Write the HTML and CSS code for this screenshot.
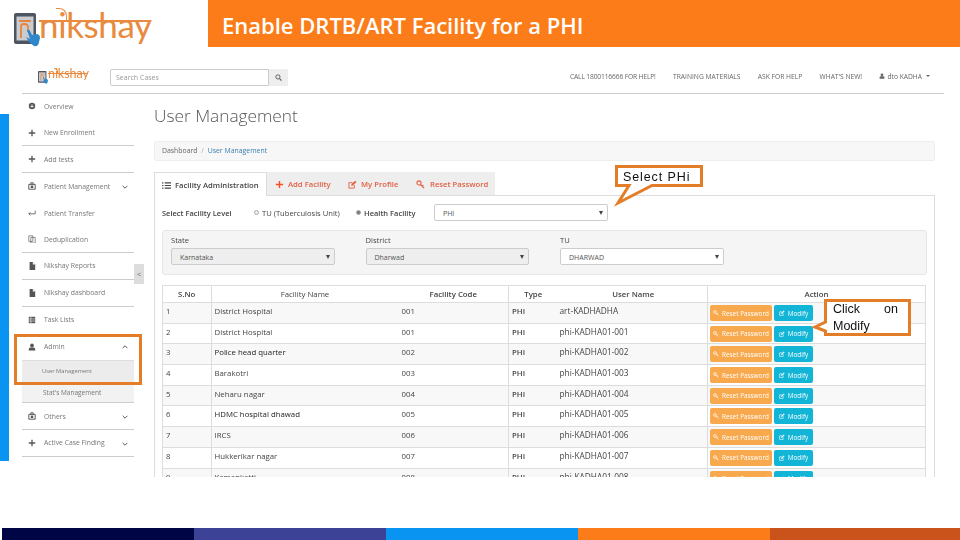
FILE: index.html
```html
<!DOCTYPE html>
<html lang="en">
<head>
<meta charset="utf-8">
<title>Enable DRTB/ART Facility for a PHI</title>
<link rel="stylesheet" href="styles.css">
</head>
<body>
<svg class="defs" width="0" height="0" aria-hidden="true">
  <symbol id="i-tablet" viewBox="0 0 26 34">
    <rect x="0" y="0" width="22" height="31" rx="2" fill="#4d5560"/>
    <rect x="2.500" y="3.500" width="17" height="24" fill="#c9ccd0"/>
    <path d="M5 8H17M7 25V13Q7 11 10 11Q14 11 14 14V19" fill="none" stroke="#e8853a" stroke-width="1.800"/>
    <path d="M13 17Q15 16 16 18L18 22L22 21Q26 21 26 25L24.500 31Q23 34 20 33L15 29L12 24L16 26Z" fill="#2f86c9"/>
  </symbol>
  <symbol id="i-plus" viewBox="0 0 10 10"><path d="M5 1V9M1 5H9" stroke="currentColor" stroke-width="1.600" fill="none"/></symbol>
  <symbol id="i-home" viewBox="0 0 10 10"><circle cx="5" cy="5" r="4" fill="currentColor"/><path d="M3 5.500H7M5 3V7" stroke="#fff" stroke-width="1"/></symbol>
  <symbol id="i-box" viewBox="0 0 10 10"><path d="M1 3H9V9H1ZM3.500 3V1H6.500V3" fill="none" stroke="currentColor" stroke-width="1.200"/><rect x="3.500" y="4.500" width="3" height="3" fill="currentColor"/></symbol>
  <symbol id="i-transfer" viewBox="0 0 10 10"><path d="M9 2V6H1M3 4L1 6L3 8" fill="none" stroke="currentColor" stroke-width="1"/></symbol>
  <symbol id="i-copy" viewBox="0 0 10 10"><path d="M1 1H6V8H1ZM3.500 3H9V10H3.500Z" fill="#fff" stroke="currentColor" stroke-width=".8"/></symbol>
  <symbol id="i-file" viewBox="0 0 10 10"><path d="M2 0H6L9 3V10H2Z" fill="currentColor"/><path d="M6 0V3H9" fill="#fff"/></symbol>
  <symbol id="i-list" viewBox="0 0 10 10"><path d="M1 1H9V9H1Z" fill="currentColor"/><path d="M1 3.700H9M1 6.300H9M3.600 1V9" stroke="#fff" stroke-width=".7"/></symbol>
  <symbol id="i-user" viewBox="0 0 10 10"><circle cx="5" cy="3" r="2.300" fill="currentColor"/><path d="M1 9.500V7.500Q1 5.500 3 5.500H7Q9 5.500 9 7.500V9.500Z" fill="currentColor"/></symbol>
  <symbol id="i-down" viewBox="0 0 10 10"><path d="M2 3.500L5 6.500L8 3.500" fill="none" stroke="currentColor" stroke-width="1.200"/></symbol>
  <symbol id="i-up" viewBox="0 0 10 10"><path d="M2 6.500L5 3.500L8 6.500" fill="none" stroke="currentColor" stroke-width="1.200"/></symbol>
  <symbol id="i-lines" viewBox="0 0 10 10"><path d="M0 2H1.500M3 2H10M0 5H1.500M3 5H10M0 8H1.500M3 8H10" stroke="currentColor" stroke-width="1.300"/></symbol>
  <symbol id="i-edit" viewBox="0 0 10 10"><path d="M7 5.500V9H1V3H5" fill="none" stroke="currentColor" stroke-width="1"/><path d="M3.500 6.500L4 4.500L8 .8L9.400 2.200L5.500 6Z" fill="currentColor"/></symbol>
  <symbol id="i-key" viewBox="0 0 10 10"><circle cx="3.300" cy="3.300" r="2.300" fill="none" stroke="currentColor" stroke-width="1.200"/><path d="M5 5L9 9M7 7L8.300 5.700" fill="none" stroke="currentColor" stroke-width="1.200"/></symbol>
  <symbol id="i-search" viewBox="0 0 10 10"><circle cx="4.200" cy="4.200" r="3" fill="none" stroke="currentColor" stroke-width="1.300"/><path d="M6.500 6.500L9.300 9.300" stroke="currentColor" stroke-width="1.500"/></symbol>
</svg>

<div class="slide">
  <header class="slide-head">
    <div class="brand brand-large">
      <svg class="brand-mark"><use href="#i-tablet"/></svg>
      <span class="brand-word">nikshay</span>
    </div>
    <h1 class="slide-title">Enable DRTB/ART Facility for a PHI</h1>
  </header>

  <div class="shot">
    <div class="topbar">
      <div class="brand brand-small">
        <svg class="brand-mark"><use href="#i-tablet"/></svg>
        <span class="brand-word">nikshay</span>
      </div>
      <div class="search">
        <span class="search-input">Search Cases</span>
        <span class="search-btn"><svg class="ico"><use href="#i-search"/></svg></span>
      </div>
      <nav class="topnav">
        <span class="top-call">CALL 1800116666 FOR HELP!</span>
        <span>TRAINING MATERIALS</span>
        <span>ASK FOR HELP</span>
        <span>WHAT'S NEW!</span>
        <span class="topuser"><svg class="ico-s"><use href="#i-user"/></svg> dto KADHA <i class="caret"></i></span>
      </nav>
    </div>

    <div class="shot-body">
      <aside class="side">
        <div class="nav-item"><svg class="ico"><use href="#i-home"/></svg>Overview</div>
        <div class="nav-item line"><svg class="ico"><use href="#i-plus"/></svg>New Enrollment</div>
        <div class="nav-item line"><svg class="ico"><use href="#i-plus"/></svg>Add tests</div>
        <div class="nav-item"><svg class="ico"><use href="#i-box"/></svg>Patient Management<svg class="chev"><use href="#i-down"/></svg></div>
        <div class="nav-item"><svg class="ico"><use href="#i-transfer"/></svg>Patient Transfer</div>
        <div class="nav-item line"><svg class="ico"><use href="#i-copy"/></svg>Deduplication</div>
        <div class="nav-item line"><svg class="ico"><use href="#i-file"/></svg>Nikshay Reports</div>
        <div class="nav-item line"><svg class="ico"><use href="#i-file"/></svg>Nikshay dashboard</div>
        <div class="nav-item"><svg class="ico"><use href="#i-list"/></svg>Task Lists</div>
        <div class="nav-item"><svg class="ico"><use href="#i-user"/></svg>Admin<svg class="chev"><use href="#i-up"/></svg></div>
        <div class="sub-item sub-active">User Management</div>
        <div class="sub-item line">Stat's Management</div>
        <div class="nav-item line"><svg class="ico"><use href="#i-box"/></svg>Others<svg class="chev"><use href="#i-down"/></svg></div>
        <div class="nav-item line"><svg class="ico"><use href="#i-plus"/></svg>Active Case Finding<svg class="chev"><use href="#i-down"/></svg></div>
      </aside>

      <main class="main">
        <h2 class="page-title">User Management</h2>
        <div class="crumb">Dashboard <span class="crumb-sep">/</span> <span class="crumb-link">User Management</span></div>

        <div class="tabs">
          <div class="tab tab-active"><svg class="ico-t"><use href="#i-lines"/></svg>Facility Administration</div>
          <div class="tab-rest">
            <div class="tab tab-add"><svg class="ico-t"><use href="#i-plus"/></svg>Add Facility</div>
            <div class="tab tab-profile"><svg class="ico-t"><use href="#i-edit"/></svg>My Profile</div>
            <div class="tab tab-reset"><svg class="ico-t"><use href="#i-key"/></svg>Reset Password</div>
          </div>
        </div>

        <div class="panel">
          <div class="level">
            <b class="level-label">Select Facility Level</b>
            <span class="radio radio-tu"><i class="dot"></i>TU (Tuberculosis Unit)</span>
            <span class="radio radio-hf"><i class="dot dot-on"></i>Health Facility</span>
            <span class="select select-level">PHI<i class="arrow"></i></span>
          </div>

          <div class="filters">
            <div class="filter"><label>State</label><span class="select select-off">Karnataka<i class="arrow"></i></span></div>
            <div class="filter"><label>District</label><span class="select select-off">Dharwad<i class="arrow"></i></span></div>
            <div class="filter"><label>TU</label><span class="select">DHARWAD<i class="arrow"></i></span></div>
          </div>

          <table class="grid">
            <thead>
              <tr><th class="c-no">S.No</th><th class="c-name">Facility Name</th><th class="c-code">Facility Code</th><th class="c-type">Type</th><th class="c-user">User Name</th><th class="c-act">Action</th></tr>
            </thead>
            <tbody>
              <tr><td class="c-no">1</td><td class="c-name">District Hospital</td><td class="c-code">001</td><td class="c-type">PHI</td><td class="c-user">art-KADHADHA</td><td class="c-act"><span class="btn btn-reset"><svg class="ico-b"><use href="#i-key"/></svg>Reset Password</span><span class="btn btn-mod"><svg class="ico-b"><use href="#i-edit"/></svg>Modify</span></td></tr>
              <tr><td class="c-no">2</td><td class="c-name">District Hospital</td><td class="c-code">001</td><td class="c-type">PHI</td><td class="c-user">phi-KADHA01-001</td><td class="c-act"><span class="btn btn-reset"><svg class="ico-b"><use href="#i-key"/></svg>Reset Password</span><span class="btn btn-mod"><svg class="ico-b"><use href="#i-edit"/></svg>Modify</span></td></tr>
              <tr><td class="c-no">3</td><td class="c-name c-dark">Police head quarter</td><td class="c-code">002</td><td class="c-type">PHI</td><td class="c-user">phi-KADHA01-002</td><td class="c-act"><span class="btn btn-reset"><svg class="ico-b"><use href="#i-key"/></svg>Reset Password</span><span class="btn btn-mod"><svg class="ico-b"><use href="#i-edit"/></svg>Modify</span></td></tr>
              <tr><td class="c-no">4</td><td class="c-name">Barakotri</td><td class="c-code">003</td><td class="c-type">PHI</td><td class="c-user">phi-KADHA01-003</td><td class="c-act"><span class="btn btn-reset"><svg class="ico-b"><use href="#i-key"/></svg>Reset Password</span><span class="btn btn-mod"><svg class="ico-b"><use href="#i-edit"/></svg>Modify</span></td></tr>
              <tr><td class="c-no">5</td><td class="c-name">Neharu nagar</td><td class="c-code">004</td><td class="c-type">PHI</td><td class="c-user">phi-KADHA01-004</td><td class="c-act"><span class="btn btn-reset"><svg class="ico-b"><use href="#i-key"/></svg>Reset Password</span><span class="btn btn-mod"><svg class="ico-b"><use href="#i-edit"/></svg>Modify</span></td></tr>
              <tr><td class="c-no">6</td><td class="c-name c-dark">HDMC hospital dhawad</td><td class="c-code">005</td><td class="c-type">PHI</td><td class="c-user">phi-KADHA01-005</td><td class="c-act"><span class="btn btn-reset"><svg class="ico-b"><use href="#i-key"/></svg>Reset Password</span><span class="btn btn-mod"><svg class="ico-b"><use href="#i-edit"/></svg>Modify</span></td></tr>
              <tr><td class="c-no">7</td><td class="c-name">IRCS</td><td class="c-code">006</td><td class="c-type">PHI</td><td class="c-user">phi-KADHA01-006</td><td class="c-act"><span class="btn btn-reset"><svg class="ico-b"><use href="#i-key"/></svg>Reset Password</span><span class="btn btn-mod"><svg class="ico-b"><use href="#i-edit"/></svg>Modify</span></td></tr>
              <tr><td class="c-no">8</td><td class="c-name">Hukkerikar nagar</td><td class="c-code">007</td><td class="c-type">PHI</td><td class="c-user">phi-KADHA01-007</td><td class="c-act"><span class="btn btn-reset"><svg class="ico-b"><use href="#i-key"/></svg>Reset Password</span><span class="btn btn-mod"><svg class="ico-b"><use href="#i-edit"/></svg>Modify</span></td></tr>
              <tr><td class="c-no">9</td><td class="c-name">Kamankatti</td><td class="c-code">008</td><td class="c-type">PHI</td><td class="c-user">phi-KADHA01-008</td><td class="c-act"><span class="btn btn-reset"><svg class="ico-b"><use href="#i-key"/></svg>Reset Password</span><span class="btn btn-mod"><svg class="ico-b"><use href="#i-edit"/></svg>Modify</span></td></tr>
            </tbody>
          </table>
        </div>
      </main>
    </div>
  </div>

  <footer class="slide-foot">
    <span class="band band-1"></span>
    <span class="band band-2"></span>
    <span class="band band-3"></span>
    <span class="band band-4"></span>
    <span class="band band-5"></span>
  </footer>

  <div class="edge-strip"></div>
  <div class="collapse-tab">&lt;</div>
  <div class="admin-mark"></div>

  <div class="callout callout-phi">
    <svg class="callout-shape" viewBox="0 0 88 40"><path d="M1.500 1.500H86.500V20.500H37L3 38L14 20.500H1.500Z"/></svg>
    <span class="callout-text">Select PHi</span>
  </div>
  <div class="callout callout-mod">
    <svg class="callout-shape" viewBox="0 0 98 37"><path d="M12.500 1.500H96.500V35.500H12.500V32L2 28L12.500 23Z"/></svg>
    <span class="callout-text"><span class="callout-spread"><span>Click</span><span>on</span></span>Modify</span>
  </div>
</div>
</body>
</html>
```

FILE: styles.css
```css
* { box-sizing: border-box; }
html, body { margin: 0; padding: 0; background: #fff; }
.defs { position: absolute; }

.slide {
  position: relative;
  width: 960px;
  height: 540px;
  overflow: hidden;
  display: flex;
  flex-direction: column;
  font-family: "Open Sans", "Liberation Sans", sans-serif;
  color: #555;
}

/* slide header */
.slide-head { display: flex; height: 47px; flex: none; }
.slide-title {
  flex: 1;
  margin: 0;
  padding-left: 14px;
  background: #fb7c18;
  color: #fff;
  font-size: 22px;
  font-weight: 600;
  line-height: 51px;
  height: 47px;
  overflow: hidden;
}

/* logo */
.brand { display: flex; align-items: flex-start; color: #e98a3e; }
.brand-word {
  position: relative;
  font-family: "Lato", sans-serif;
  font-weight: 400;
  line-height: 1;
  white-space: nowrap;
}
.brand-word::before {
  content: "";
  position: absolute;
  left: 0;
  right: 0;
  background: #e98a3e;
}
.brand-word::after {
  content: "";
  position: absolute;
  border: 1.500px solid #e98a3e;
  border-left: 0;
  border-bottom: 0;
  border-radius: 0 8px 0 0;
}
.brand-large { width: 208px; padding: 13px 0 0 14px; }
.brand-large .brand-mark { width: 26px; height: 34px; flex: none; margin-right: -1px; }
.brand-large .brand-word { font-size: 35px; letter-spacing: -.4px; width: 111px; margin-top: -6px; }
.brand-large .brand-word::before { top: 13px; height: 1.500px; }
.brand-large .brand-word::after { left: 17px; top: 1px; width: 10px; height: 12px; }
.brand-small { width: 88px; padding: 11px 0 0 16px; }
.brand-small .brand-mark { width: 10px; height: 13px; flex: none; }
.brand-small .brand-word { font-size: 12.600px; letter-spacing: -.1px; width: 40px; margin-top: -3px; }
.brand-small .brand-word::before { top: 4.600px; height: 1px; }
.brand-small .brand-word::after { left: 6px; top: 0; width: 3px; height: 4px; border-width: 1px; border-left: 0; border-bottom: 0; }

/* embedded screenshot */
.shot {
  flex: none;
  width: 922px;
  height: 420px;
  margin: 13px 0 0 22px;
  overflow: hidden;
  filter: blur(.4px);
}
.topbar {
  display: flex;
  height: 34px;
  border-bottom: 1px solid #ccc;
  font-size: 6.700px;
  color: #666;
}
.search { display: flex; height: 17px; margin-top: 9px; }
.search-input {
  width: 159px;
  border: 1px solid #ccc;
  border-radius: 2px 0 0 2px;
  padding-left: 5px;
  line-height: 15px;
  font-size: 7px;
  color: #999;
}
.search-btn { width: 19px; background: #eee; display: flex; align-items: center; justify-content: center; color: #444; }
.search-btn .ico { width: 7px; height: 7px; margin: 0; }
.topnav { margin-left: auto; display: flex; gap: 17.300px; align-items: center; padding: 0 14px 1px 0; white-space: nowrap; }
.top-call { letter-spacing: -.15px; }
.topuser { display: flex; align-items: center; gap: 2px; }
.ico-s { width: 6px; height: 6px; }
.caret { display: inline-block; margin-left: 2px; border: 2px solid transparent; border-top-color: #666; border-bottom: 0; }

.shot-body { display: flex; height: 386px; }

/* sidebar */
.side { width: 112px; flex: none; font-size: 6.800px; color: #777; margin-top: -1px; }
.nav-item { display: flex; align-items: center; height: 26.700px; position: relative; white-space: nowrap; }
.line { border-bottom: 1px solid #ccc; }
.ico { width: 8px; height: 8px; margin: 0 8px 0 6px; color: #555; flex: none; }
.chev { width: 8px; height: 8px; color: #555; position: absolute; right: 5px; top: 10px; }
.sub-item { height: 21.500px; line-height: 21px; padding-left: 21px; font-size: 6.500px; background: #f2f2f2; }
.sub-active { background: #ececec; border-top: 1px solid #ddd; height: 22px; padding-left: 20px; font-size: 5.800px; }

/* main */
.main { width: 781px; margin-left: 20px; flex: none; }
.page-title { margin: 0; height: 47px; padding-top: 10px; font-size: 17.300px; line-height: 24px; font-weight: 300; color: #555; }
.crumb {
  height: 20px;
  line-height: 18px;
  background: #f7f7f7;
  border: 1px solid #eee;
  border-radius: 2px;
  padding-left: 7px;
  font-size: 6.900px;
  color: #666;
}
.crumb-sep { color: #aaa; margin: 0 2px; }
.crumb-link { color: #3b7fb0; }

/* tabs */
.tabs { position: relative; display: flex; height: 23px; margin-top: 11px; font-size: 7.700px; font-weight: 600; }
.tab { display: flex; align-items: center; height: 23px; white-space: nowrap; padding-top: 1px; }
.tab-active { width: 113px; padding-left: 7px; color: #444; border: 1px solid #ddd; border-bottom: 0; background: #fff; height: 24px; }
.tab-rest { display: flex; width: 228px; background: #eee; color: #e25f43; }
.tab-add { padding-left: 8px; width: 81px; }
.tab-profile { width: 68px; }
.tab-add .ico-t { color: #f4511e; }
.tab-reset .ico-t { margin-right: 5px; }
.ico-t { width: 9px; height: 9px; margin-right: 4px; flex: none; }

/* panel */
.panel { height: 282px; border: 1px solid #ddd; border-bottom: 0; padding: 8px 7px 0; overflow: hidden; }
.level { display: flex; align-items: center; height: 17px; font-size: 7.600px; color: #444; white-space: nowrap; }
.level-label { font-weight: 600; width: 92px; font-size: 7.500px; }
.radio { display: flex; align-items: center; gap: 3px; }
.radio-tu { width: 102px; }
.radio-hf { width: 78px; font-weight: 600; font-size: 7.500px; }
.dot { width: 5px; height: 5px; border-radius: 50%; border: 1px solid #aaa; background: #eee; }
.dot-on { background: #777; }
.select {
  position: relative;
  display: block;
  height: 17px;
  line-height: 17px;
  padding-left: 8px;
  border: 1px solid #ccc;
  border-radius: 2px;
  background: #fff;
  font-size: 7px;
  font-weight: 400;
  color: #555;
}
.select-level { width: 174px; }
.select-off { background: #eee; }
.arrow { position: absolute; right: 4px; top: 6px; border: 2.500px solid transparent; border-top: 4px solid #444; border-bottom: 0; }

.filters {
  display: flex;
  gap: 31px;
  height: 45px;
  margin: 9px 0 10px;
  padding: 3px 8px 0;
  background: #f5f5f5;
  border: 1px solid #e6e6e6;
  border-radius: 3px;
}
.filter { width: 163.500px; font-size: 7.600px; color: #444; }
.filter label { display: block; height: 14px; line-height: 12px; }

/* table */
.grid { width: 764px; table-layout: fixed; border-collapse: collapse; font-size: 7.800px; color: #444; border: 1px solid #ddd; }
.grid th { height: 17px; font-weight: 600; text-align: center; border-bottom: 1px solid #ddd; padding: 0; overflow: hidden; white-space: nowrap; }
.grid td { height: 20.700px; padding: 3px 0 0 3px; vertical-align: top; border-bottom: 1px solid #ddd; white-space: nowrap; overflow: hidden; line-height: 11px; }
.grid tbody tr:nth-child(odd) { background: #f8f8f8; }
.grid .c-no { width: 48.500px; border-right: 1px solid #ddd; }
.grid .c-name { width: 187.500px; font-weight: 500; }
.grid .c-code { width: 110px; border-right: 1px solid #ddd; }
.grid .c-type { width: 49px; font-weight: 600; }
.grid .c-user { width: 150px; border-right: 1px solid #ddd; padding-left: 2px; }
.grid td.c-user { font-size: 8.300px; line-height: 10px; }
.grid .c-act { width: 218px; }
.grid .c-dark { color: #222; }
.grid td.c-act { padding: 2px 0 0 2px; }
.btn {
  display: inline-flex;
  align-items: center;
  justify-content: center;
  height: 16px;
  border-radius: 2px;
  color: #fff;
  font-size: 6.400px;
  vertical-align: top;
}
.btn-reset { width: 62px; background: #f9a94d; margin-right: 2px; }
.btn-mod { width: 39px; background: #13b5d6; }
.ico-b { width: 6px; height: 6px; margin-right: 3px; }

/* footer */
.slide-foot { margin-top: auto; display: flex; height: 12px; padding-left: 2px; flex: none; }
.band { width: 192px; }
.band-1 { background: #000546; }
.band-2 { background: #3c4397; }
.band-3 { background: #0a94f2; }
.band-4 { background: #fb7c18; }
.band-5 { background: #c9531a; width: 190px; }

/* overlays */
.edge-strip { position: absolute; left: 0; top: 114px; width: 9px; height: 347px; background: #0a94f2; }
.collapse-tab {
  position: absolute;
  left: 134px;
  top: 264px;
  width: 10px;
  height: 20px;
  background: #ddd;
  color: #777;
  font-size: 8px;
  line-height: 20px;
  text-align: center;
}
.admin-mark { position: absolute; left: 14px; top: 334px; width: 128px; height: 51px; border: 3px solid #e37d28; }
.callout { position: absolute; font-family: "Liberation Sans", sans-serif; font-size: 12.500px; color: #111; }
.callout-shape { position: absolute; left: 0; top: 0; width: 100%; height: 100%; overflow: visible; }
.callout-shape path { fill: #fff; stroke: #e37d28; stroke-width: 3px; }
.callout-text { position: relative; display: block; }
.callout-phi { left: 615px; top: 165px; width: 88px; height: 40px; }
.callout-phi .callout-text { padding: 5px 0 0 8px; letter-spacing: .9px; line-height: 14px; }
.callout-mod { left: 813px; top: 299px; width: 98px; height: 37px; }
.callout-mod .callout-text { padding: 2px 13px 0 20px; line-height: 17px; }
.callout-spread { display: flex; justify-content: space-between; }
```
